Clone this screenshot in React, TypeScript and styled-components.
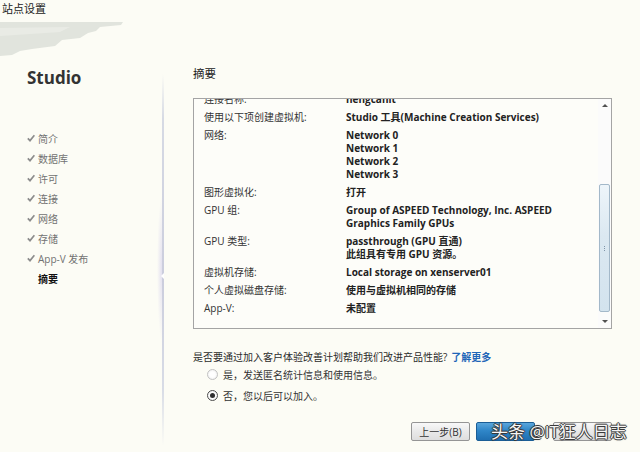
import React, { useLayoutEffect, useRef } from "react";
import styled, { createGlobalStyle } from "styled-components";

const GlobalStyle = createGlobalStyle`
  html, body {
    margin: 0;
    padding: 0;
    background: #fcfcf5;
  }
  body {
    font-family: "Open Sans", "Noto Sans CJK SC", sans-serif;
  }
`;

const Window = styled.div`
  position: relative;
  width: 640px;
  height: 452px;
  overflow: hidden;
  display: flex;
  flex-direction: column;
  background: #fcfcf5;
  color: #2b2b2b;
  font-size: 10px;
`;

const TitleBar = styled.div`
  height: 18px;
  line-height: 18px;
  padding-left: 2px;
  font-size: 11px;
  color: #222;
`;

const Main = styled.div`
  flex: 1;
  display: flex;
`;

const Sidebar = styled.div`
  width: 162px;
  display: flex;
  flex-direction: column;
`;

const Brush = styled.svg`
  display: block;
`;

const Brand = styled.div`
  margin: 10px 0 0 27px;
  font-size: 17px;
  line-height: 20px;
  font-weight: 700;
  color: #333;
`;

const NavList = styled.div`
  margin-top: 40px;
  padding-left: 27px;
  display: flex;
  flex-direction: column;
`;

const NavItem = styled.div<{ $current?: boolean }>`
  height: 20px;
  display: flex;
  align-items: center;
  gap: 3px;
  color: ${(p) => (p.$current ? "#111" : "#727272")};
  font-weight: ${(p) => (p.$current ? 700 : 400)};
`;

const CheckSlot = styled.span<{ $hidden?: boolean }>`
  width: 8px;
  height: 8px;
  display: flex;
  visibility: ${(p) => (p.$hidden ? "hidden" : "visible")};
`;

const Divider = styled.div`
  position: relative;
  width: 2px;
  height: 372px;
  margin-top: 56px;
  background: linear-gradient(
    to bottom,
    rgba(210, 214, 224, 0),
    #d6dae4 12%,
    #cbcddd 55%,
    #d8dce6 85%,
    rgba(210, 214, 224, 0)
  );
  &::before {
    content: "";
    position: absolute;
    left: -5px;
    top: 120px;
    width: 5px;
    height: 150px;
    background: radial-gradient(
      ellipse at right,
      rgba(205, 200, 235, 0.55),
      rgba(225, 235, 245, 0) 70%
    );
  }
  &::after {
    content: "";
    position: absolute;
    left: -1px;
    top: 199px;
    border-top: 3px solid transparent;
    border-bottom: 3px solid transparent;
    border-right: 3px solid #ffffff;
  }
`;

const Content = styled.div`
  width: 419px;
  margin-left: 29px;
  display: flex;
  flex-direction: column;
`;

const Heading = styled.div`
  margin-top: 48px;
  font-size: 11.5px;
  line-height: 16px;
  color: #222;
`;

const SummaryBox = styled.div`
  margin-top: 16px;
  height: 231px;
  box-sizing: border-box;
  border: 1px solid #a4a4a4;
  background: #fdfdf9;
  display: flex;
`;

const Viewport = styled.div`
  flex: 1;
  overflow: hidden;
`;

const List = styled.div`
  padding: 4px 0 40px 10px;
`;

const Row = styled.div`
  display: flex;
  margin-bottom: 5px;
  line-height: 13px;
`;

const Label = styled.div`
  width: 142px;
  flex-shrink: 0;
  color: #333;
`;

const Value = styled.div`
  font-weight: 700;
  color: #222;
`;

const Scrollbar = styled.div`
  width: 13px;
  display: flex;
  flex-direction: column;
  background: #fbfbfb;
`;

const ArrowBtn = styled.div<{ $down?: boolean }>`
  height: 13px;
  display: flex;
  align-items: center;
  justify-content: center;
  &::after {
    content: "";
    border-left: 3px solid transparent;
    border-right: 3px solid transparent;
    ${(p) =>
      p.$down
        ? "border-top: 3px solid #505050;"
        : "border-bottom: 3px solid #505050;"}
  }
`;

const Track = styled.div`
  flex: 1;
  padding-top: 72px;
`;

const Thumb = styled.div`
  height: 128px;
  box-sizing: border-box;
  margin: 0 1px;
  border: 1px solid #a3b8c9;
  border-radius: 2px;
  background: linear-gradient(to bottom, #eef5fa, #dbe8f1 40%, #d3e3ee);
  display: flex;
  align-items: center;
  justify-content: center;
`;

const Grip = styled.span`
  width: 1px;
  height: 5px;
  background: repeating-linear-gradient(
    to bottom,
    #7f95a8 0 1px,
    transparent 1px 2px
  );
`;

const Question = styled.div`
  margin-top: 21px;
  line-height: 14px;
  color: #2b2b2b;
`;

const MoreLink = styled.a`
  margin-left: 4px;
  color: #1f66b8;
  font-weight: 700;
  text-decoration: none;
`;

const RadioRow = styled.label`
  height: 21px;
  display: flex;
  align-items: center;
  gap: 5px;
  padding-left: 14px;
  color: #333;
`;

const RadioDot = styled.span<{ $checked?: boolean }>`
  width: 11px;
  height: 11px;
  box-sizing: border-box;
  border-radius: 50%;
  border: 1px solid ${(p) => (p.$checked ? "#4d4d4d" : "#c2c2c2")};
  background: radial-gradient(circle, #ffffff 40%, #e9e9e9);
  display: flex;
  align-items: center;
  justify-content: center;
  &::after {
    content: "";
    width: 5px;
    height: 5px;
    border-radius: 50%;
    background: ${(p) => (p.$checked ? "#2e2e2e" : "transparent")};
  }
`;

const ButtonBar = styled.div`
  margin-top: 16px;
  display: flex;
  justify-content: flex-end;
`;

const Button = styled.button<{ $primary?: boolean; $gap?: number }>`
  width: 59px;
  height: 19px;
  margin: 0 0 0 ${(p) => p.$gap ?? 0}px;
  padding: 0;
  box-sizing: border-box;
  border-radius: 2px;
  border: 1px solid ${(p) => (p.$primary ? "#1b5e96" : "#959595")};
  background: ${(p) =>
    p.$primary
      ? "linear-gradient(to bottom, #5aa6db, #2f86c8 45%, #1f6fb1)"
      : "linear-gradient(to bottom, #f8f8f8, #e9e9e9 50%, #dedede)"};
  color: ${(p) => (p.$primary ? "#fff" : "#333")};
  font-family: inherit;
  font-size: 10px;
`;

const Watermark = styled.div`
  position: absolute;
  left: 491px;
  top: 420px;
  font-size: 17px;
  line-height: 24px;
  color: #f6f6f6;
  text-shadow: 1px 0 0 #3a3a3a, -1px 0 0 #3a3a3a, 0 1px 0 #3a3a3a,
    0 -1px 0 #3a3a3a, 0 0 2px #222;
  white-space: nowrap;
  pointer-events: none;
`;

const Check = () => (
  <svg width="8" height="8" viewBox="0 0 8 8">
    <path
      d="M0.8 4.3 L3 6.6 L7.4 1.2"
      fill="none"
      stroke="#8c8c8c"
      strokeWidth="1.7"
    />
  </svg>
);

const steps = ["简介", "数据库", "许可", "连接", "网络", "存储", "App-V 发布"];

const summary: [string, string[]][] = [
  ["连接名称:", ["hengcanit"]],
  ["使用以下项创建虚拟机:", ["Studio 工具(Machine Creation Services)"]],
  ["网络:", ["Network 0", "Network 1", "Network 2", "Network 3"]],
  ["图形虚拟化:", ["打开"]],
  ["GPU 组:", ["Group of ASPEED Technology, Inc. ASPEED", "Graphics Family GPUs"]],
  ["GPU 类型:", ["passthrough (GPU 直通)", "此组具有专用 GPU 资源。"]],
  ["虚拟机存储:", ["Local storage on xenserver01"]],
  ["个人虚拟磁盘存储:", ["使用与虚拟机相同的存储"]],
  ["App-V:", ["未配置"]],
];

const App = () => {
  const viewRef = useRef<HTMLDivElement>(null);
  useLayoutEffect(() => {
    // the list is scrolled a little, first row half hidden
    if (viewRef.current) viewRef.current.scrollTop = 10;
  }, []);

  return (
    <Window>
      <GlobalStyle />
      <TitleBar>站点设置</TitleBar>
      <Main>
        <Sidebar>
          <Brush width="125" height="40" viewBox="0 0 125 40">
            <path
              d="M0 4 L123 4 L121 7 L100 9 L96 13 L88 15 L80 20 L62 22 L55 28 L32 31 L20 33 L12 37 L0 38 Z"
              fill="#e1e4dd"
            />
            <path d="M0 10 L70 9 L60 14 L30 16 L0 18 Z" fill="#e9ebe5" />
          </Brush>
          <Brand>Studio</Brand>
          <NavList>
            {steps.map((s) => (
              <NavItem key={s}>
                <CheckSlot>
                  <Check />
                </CheckSlot>
                {s}
              </NavItem>
            ))}
            <NavItem $current>
              <CheckSlot $hidden />
              摘要
            </NavItem>
          </NavList>
        </Sidebar>
        <Divider />
        <Content>
          <Heading>摘要</Heading>
          <SummaryBox>
            <Viewport ref={viewRef}>
              <List>
                {summary.map(([label, lines]) => (
                  <Row key={label}>
                    <Label>{label}</Label>
                    <Value>
                      {lines.map((l) => (
                        <div key={l}>{l}</div>
                      ))}
                    </Value>
                  </Row>
                ))}
              </List>
            </Viewport>
            <Scrollbar>
              <ArrowBtn />
              <Track>
                <Thumb>
                  <Grip />
                </Thumb>
              </Track>
              <ArrowBtn $down />
            </Scrollbar>
          </SummaryBox>
          <Question>
            是否要通过加入客户体验改善计划帮助我们改进产品性能?
            <MoreLink href="#">了解更多</MoreLink>
          </Question>
          <RadioRow>
            <RadioDot />
            是，发送匿名统计信息和使用信息。
          </RadioRow>
          <RadioRow>
            <RadioDot $checked />
            否，您以后可以加入。
          </RadioRow>
          <ButtonBar>
            <Button>上一步(B)</Button>
            <Button $primary $gap={6}></Button>
            <Button $gap={18}></Button>
          </ButtonBar>
        </Content>
      </Main>
      <Watermark>头条 @IT狂人日志</Watermark>
    </Window>
  );
};

export default App;
